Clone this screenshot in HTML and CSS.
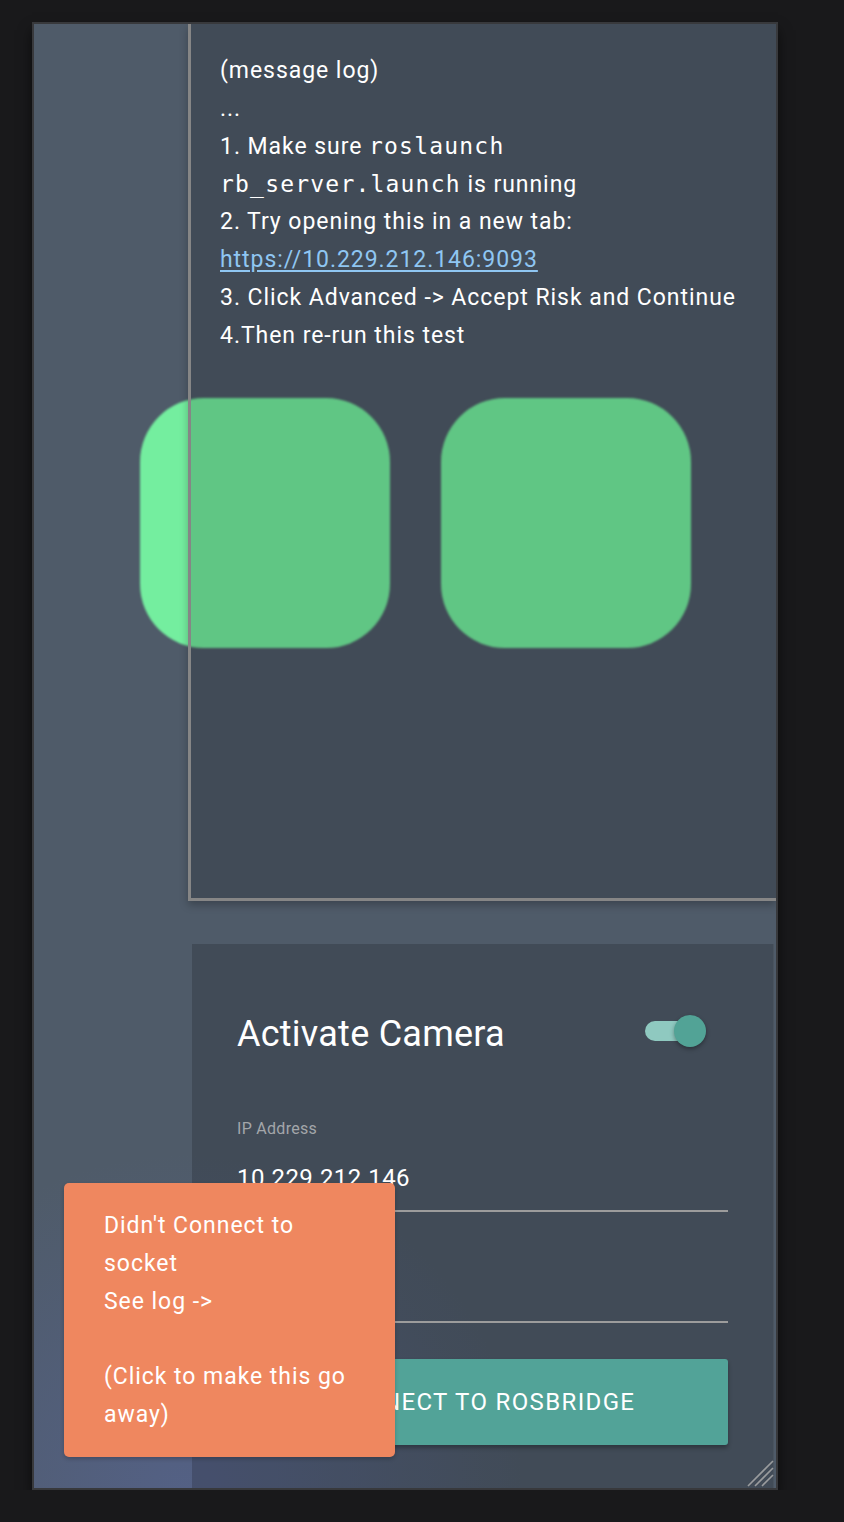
FILE: index.html
```html
<!DOCTYPE html>
<html lang="en">
<head>
<meta charset="utf-8">
<title>Rosbridge camera</title>
<link rel="stylesheet" href="styles.css">
</head>
<body>
<div class="frame">
  <section class="log-panel">
    <div class="log-text">
      <div>(message log)</div>
      <div>...</div>
      <div>1. Make sure <code>roslaunch</code></div>
      <div><code>rb_server.launch</code> is running</div>
      <div>2. Try opening this in a new tab:</div>
      <div><a href="#" class="log-link">https://10.229.212.146:9093</a></div>
      <div>3. Click Advanced -&gt; Accept Risk and Continue</div>
      <div>4.Then re-run this test</div>
    </div>
    <div class="tiles">
      <div class="tile"></div>
      <div class="tile"></div>
    </div>
  </section>

  <section class="card">
    <div class="card-head">
      <h2 class="card-title">Activate Camera</h2>
      <div class="switch">
        <span class="switch-track"></span>
        <span class="switch-thumb"></span>
      </div>
    </div>
    <div class="field">
      <div class="field-label">IP Address</div>
      <div class="field-value">10.229.212.146</div>
    </div>
    <div class="field field-empty">
      <div class="field-value">&nbsp;</div>
    </div>
    <button class="connect-btn">Connect to Rosbridge</button>
  </section>

  <div class="toast">
    Didn't Connect to<br>socket<br>See log -&gt;<br><br>(Click to make this go<br>away)
  </div>

  <svg class="grip" width="28" height="28" viewBox="0 0 28 28">
    <path d="M27 2 L2 27 M27 9 L9 27 M27 16 L16 27" stroke="#9a9c9e" stroke-width="1.6" fill="none"/>
  </svg>
</div>
</body>
</html>
```

FILE: styles.css
```css
html {
  background: #19191b;
}
body {
  margin: 0;
  padding: 22px 0 0 32px;
  font-family: Roboto, "Liberation Sans", sans-serif;
  color: #ffffff;
}

.frame {
  position: relative;
  z-index: 0;
  width: 742px;
  height: 1464px;
  border: 2px solid #38393c;
  overflow: hidden;
  background:
    radial-gradient(circle at 150px 1470px, rgba(88, 102, 160, 0.5) 0, rgba(88, 102, 160, 0) 340px),
    #4f5b69;
  box-shadow: 0 8px 12px rgba(0, 0, 0, 0.55);
}

.log-panel {
  margin-left: 154px;
  padding: 28px 0 0 29px;
  box-sizing: border-box;
  height: 877px;
  background: rgba(0, 0, 0, 0.17);
  border-left: 3px solid #868686;
  border-bottom: 3px solid #868686;
  box-shadow: 0 4px 8px rgba(0, 0, 0, 0.25);
}

.log-text {
  font-size: 23px;
  line-height: 37.85px;
  white-space: nowrap;
  letter-spacing: 0.95px;
}
.log-text code {
  font-family: "DejaVu Sans Mono", monospace;
  font-size: 23px;
  letter-spacing: 1.2px;
}
.log-link {
  color: #8fc6f2;
  text-decoration: underline;
  text-underline-offset: 3px;
}

.tiles {
  display: flex;
  gap: 51px;
  margin-top: 43px;
  margin-left: -80px;
}
.tile {
  position: relative;
  z-index: -1;
  width: 250px;
  height: 250px;
  border-radius: 64px;
  background: #74ee9f;
  filter: blur(0.8px);
}

.card {
  margin: 43px 0 0 158px;
  width: 582px;
  height: 560px;
  box-sizing: border-box;
  padding: 62px 45px 0 45px;
  background: rgba(0, 0, 0, 0.17);
  border-right: 1px solid rgba(255, 255, 255, 0.05);
}

.card-head {
  display: flex;
  align-items: center;
  justify-content: space-between;
  padding-right: 22px;
}
.card-title {
  margin: 0;
  font-size: 36px;
  font-weight: 400;
  line-height: 56px;
  letter-spacing: 0.25px;
}

.switch {
  display: flex;
  align-items: center;
  width: 61px;
  height: 32px;
  margin-top: -6px;
}
.switch-track {
  width: 48px;
  height: 20px;
  border-radius: 10px;
  background: #8fc9c0;
}
.switch-thumb {
  width: 32px;
  height: 32px;
  margin-left: -19px;
  border-radius: 50%;
  background: #52a396;
  box-shadow: 0 2px 4px rgba(0, 0, 0, 0.35);
}

.field {
  margin-top: 56px;
  border-bottom: 2px solid #9c9c9c;
  padding-bottom: 16px;
}
.field-label {
  font-size: 16px;
  line-height: 22px;
  color: #a3a6aa;
  letter-spacing: 0.3px;
}
.field-value {
  margin-top: 22px;
  font-size: 24px;
  line-height: 32px;
  letter-spacing: 0.4px;
}
.field-empty {
  margin-top: 22px;
  padding-top: 17px;
}

.connect-btn {
  display: block;
  width: 100%;
  margin-top: 36px;
  height: 86px;
  border: none;
  border-radius: 3px;
  background: #52a398;
  color: #ffffff;
  font-family: Roboto, "Liberation Sans", sans-serif;
  font-size: 24px;
  font-weight: 400;
  text-transform: uppercase;
  letter-spacing: 1.35px;
  box-shadow: 0 3px 4px rgba(0, 0, 0, 0.3);
}

.toast {
  position: absolute;
  left: 30px;
  top: 1159px;
  width: 331px;
  height: 274px;
  box-sizing: border-box;
  padding: 24px 20px 0 40px;
  background: #ef875f;
  border-radius: 5px;
  font-size: 23px;
  line-height: 37.8px;
  letter-spacing: 0.95px;
  box-shadow: 0 2px 4px rgba(0, 0, 0, 0.2);
}

.grip {
  position: absolute;
  right: 2px;
  bottom: 1px;
}
```
